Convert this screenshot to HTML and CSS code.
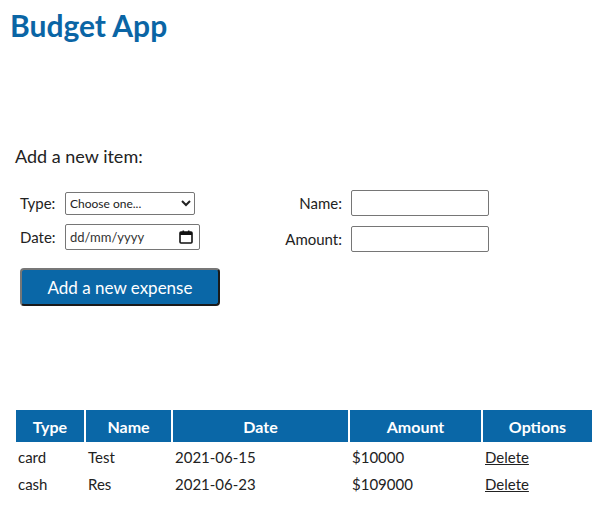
FILE: index.html
```html
<!DOCTYPE html>
<html lang="en">
<head>
<meta charset="utf-8">
<title>Budget App</title>
<link rel="stylesheet" href="styles.css">
</head>
<body>
<h1 class="title">Budget App</h1>
<section class="add">
  <h2 class="add-title">Add a new item:</h2>
  <form class="form">
    <div class="fields">
      <label class="lbl lbl-left" for="type">Type:</label>
      <select id="type" class="ctl sel"><option>Choose one...</option></select>
      <label class="lbl lbl-right" for="name">Name:</label>
      <input id="name" class="ctl txt" type="text">
      <label class="lbl lbl-left" for="date">Date:</label>
      <span class="dt">
        <input id="date" class="dt-input" type="text" placeholder="dd/mm/yyyy">
        <svg class="cal" width="14" height="14" viewBox="0 0 14 14" aria-hidden="true">
          <rect x="1" y="2" width="12" height="11" rx="1" fill="none" stroke="#111" stroke-width="1.6"/>
          <rect x="1" y="2" width="12" height="3" fill="#111"/>
          <rect x="3.5" y="0.5" width="1.6" height="3" fill="#111"/>
          <rect x="8.9" y="0.5" width="1.6" height="3" fill="#111"/>
        </svg>
      </span>
      <label class="lbl lbl-right lbl-low" for="amount">Amount:</label>
      <input id="amount" class="ctl txt txt-low" type="text">
    </div>
    <button type="button" class="btn">Add a new expense</button>
  </form>
</section>
<table class="tbl">
  <thead>
    <tr><th class="c-type">Type</th><th class="c-name">Name</th><th class="c-date">Date</th><th class="c-amt">Amount</th><th class="c-opt">Options</th></tr>
  </thead>
  <tbody>
    <tr><td>card</td><td>Test</td><td>2021-06-15</td><td>$10000</td><td><a href="#" class="del">Delete</a></td></tr>
    <tr><td>cash</td><td>Res</td><td>2021-06-23</td><td>$109000</td><td><a href="#" class="del">Delete</a></td></tr>
  </tbody>
</table>
</body>
</html>
```
FILE: styles.css
```css
body {
  margin: 8px;
  font-family: Lato, "Noto Sans", sans-serif;
  color: #222;
  background: #fff;
}
.title {
  margin: 0 0 0 2px;
  font-size: 30px;
  font-weight: 700;
  color: #0a65a5;
  line-height: 34px;
}
.add {
  padding: 102px 0 0 7px;
}
.add-title {
  margin: 0;
  font-size: 18px;
  font-weight: 400;
  line-height: 24px;
}
.form {
  padding: 22px 0 0 5px;
}
.fields {
  display: grid;
  grid-template-columns: 40px 140px 136px 140px;
  column-gap: 5px;
  row-gap: 8px;
  align-items: center;
  width: 480px;
}
.lbl {
  font-size: 15px;
  color: #222;
}
.lbl-right {
  text-align: right;
  padding-right: 4px;
}
.lbl-low,
.txt-low {
  margin-top: 2px;
  margin-bottom: -2px;
}
.ctl {
  box-sizing: border-box;
  font-family: inherit;
}
.sel {
  margin: 0;
  width: 130px;
  height: 23px;
  font-size: 12px;
  border: 1px solid #767676;
  border-radius: 2px;
  background: #fff;
  color: #222;
}
.dt {
  box-sizing: border-box;
  display: flex;
  align-items: center;
  width: 135px;
  height: 26px;
  border: 1px solid #767676;
  border-radius: 2px;
  padding: 0 6px 0 4px;
  background: #fff;
}
.dt-input {
  flex: 1;
  min-width: 0;
  border: 0;
  padding: 0;
  margin: 0;
  font-family: inherit;
  font-size: 13px;
  color: #222;
  outline: none;
  background: transparent;
}
.dt-input::placeholder {
  color: #333;
}
.cal {
  flex: none;
}
.txt {
  margin-left: 0;
  margin-right: 0;
  width: 138px;
  height: 26px;
  border: 1px solid #767676;
  border-radius: 2px;
}
.btn {
  margin-top: 18px;
  width: 200px;
  height: 38px;
  background: #0a67a7;
  color: #fff;
  border: 2px solid #1a1a1a;
  border-top-color: #777;
  border-left-color: #777;
  border-radius: 4px;
  font-family: inherit;
  font-size: 17px;
}
.tbl {
  margin: 102px 0 0 6px;
  width: 580px;
  border-spacing: 2px;
  table-layout: fixed;
  font-size: 15px;
}
.tbl th {
  background: #0a67a7;
  color: #fff;
  font-weight: 700;
  height: 32px;
  padding: 0;
  font-size: 16px;
}
.tbl td {
  padding: 2px 0 2px 2px;
  height: 21px;
  text-align: left;
}
.c-type { width: 68px; }
.c-name { width: 85px; }
.c-date { width: 175px; }
.c-amt { width: 131px; }
.c-opt { width: 109px; }
.del {
  color: #222;
  text-decoration: underline;
}
```
